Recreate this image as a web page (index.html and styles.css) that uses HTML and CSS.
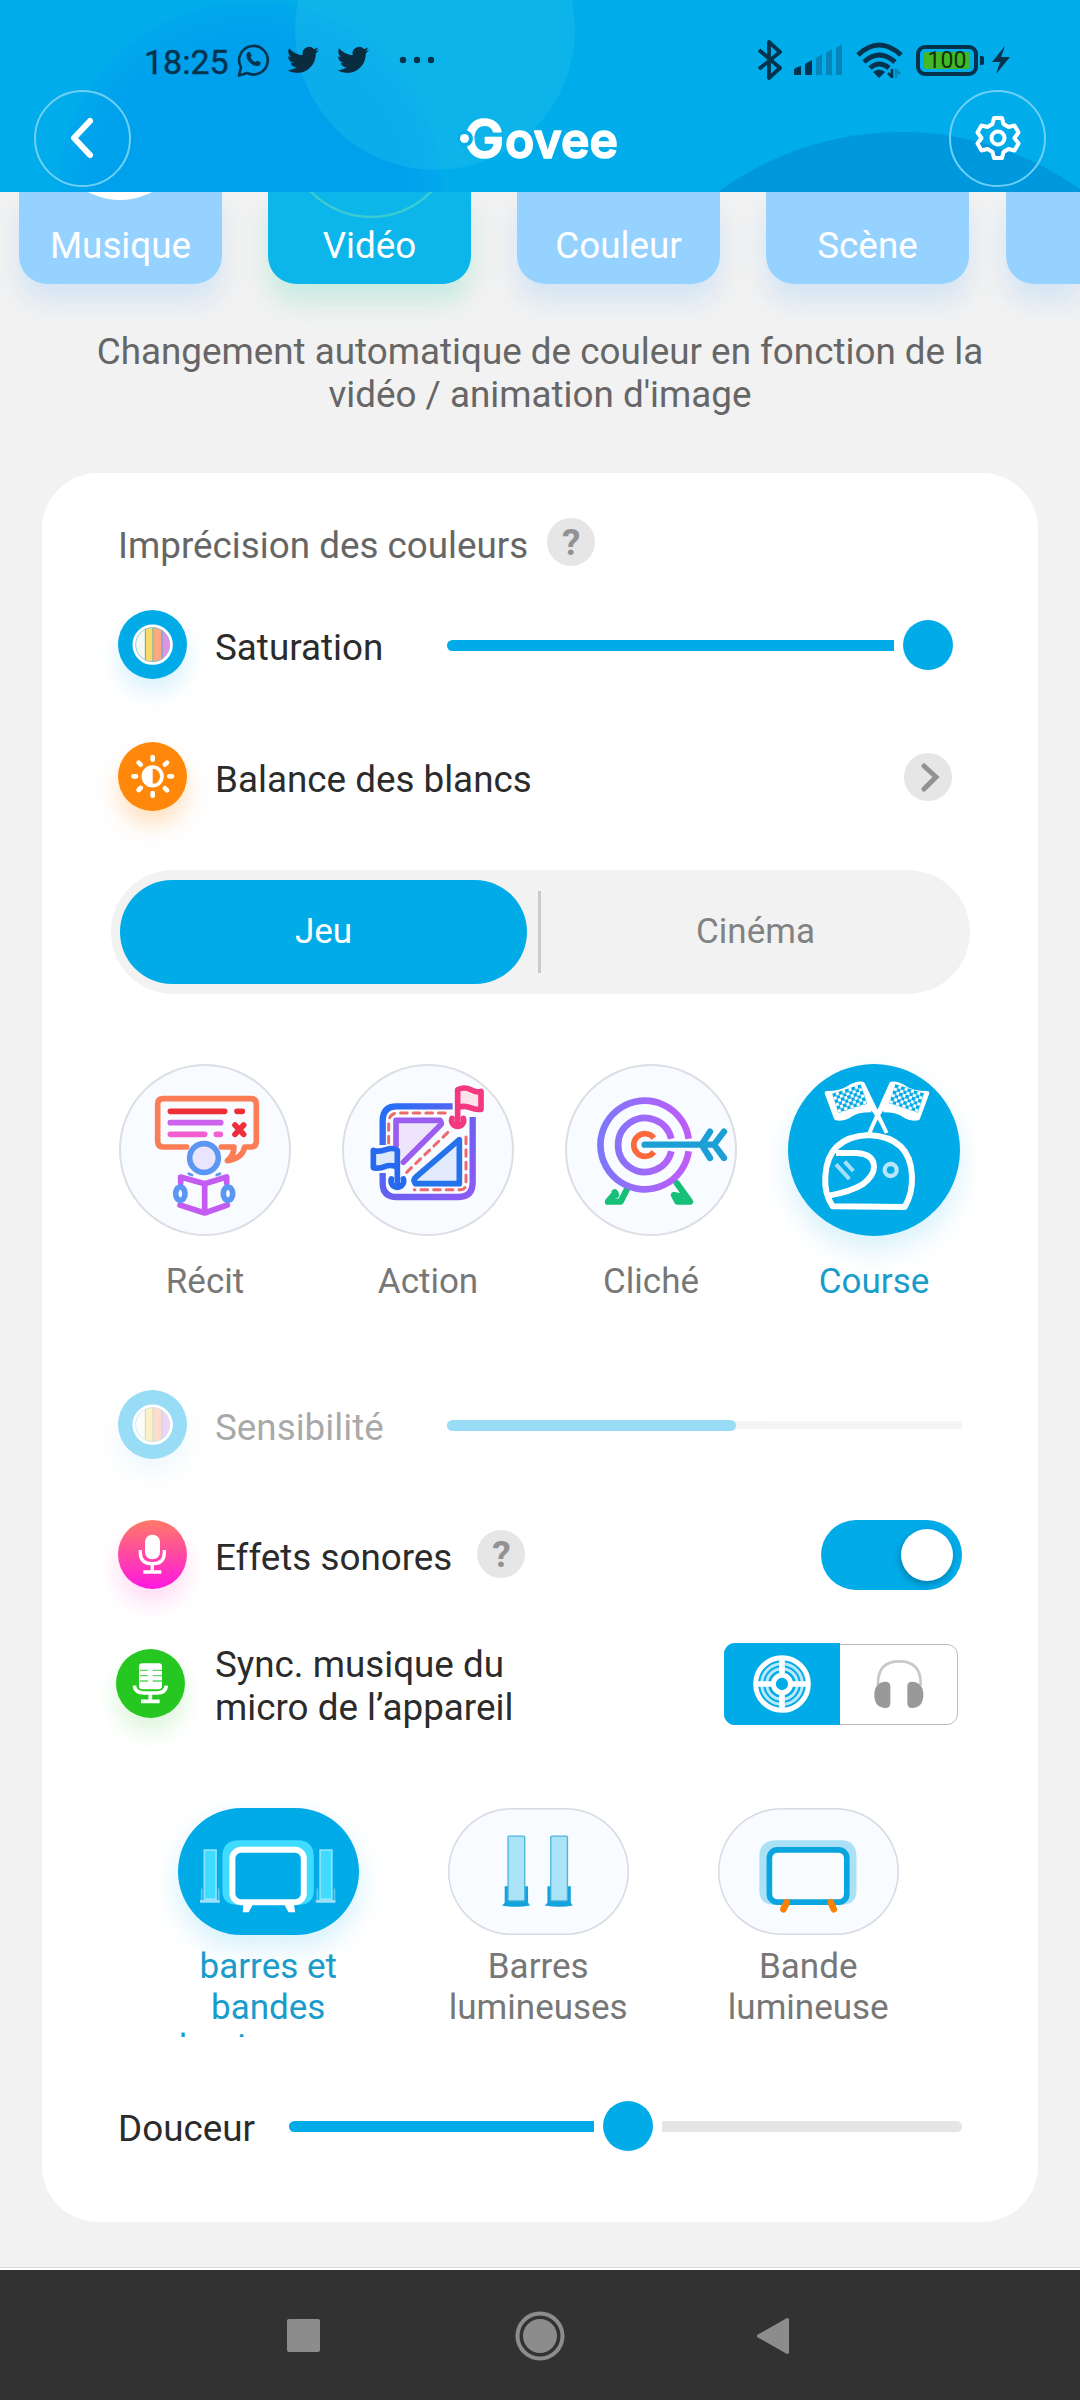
FILE: index.html
```html
<!DOCTYPE html>
<html lang="fr">
<head>
<meta charset="utf-8">
<title>Govee</title>
<link rel="stylesheet" href="styles.css">
</head>
<body>
<svg width="0" height="0" class="defs">
  <defs>
    <symbol id="bird" viewBox="0 0 24 24"><path d="M23.953 4.57a10 10 0 01-2.825.775 4.958 4.958 0 002.163-2.723c-.951.555-2.005.959-3.127 1.184a4.92 4.92 0 00-8.384 4.482C7.69 8.095 4.067 6.13 1.64 3.162a4.822 4.822 0 00-.666 2.475c0 1.71.87 3.213 2.188 4.096a4.904 4.904 0 01-2.228-.616v.06a4.923 4.923 0 003.946 4.827 4.996 4.996 0 01-2.212.085 4.936 4.936 0 004.604 3.417 9.867 9.867 0 01-6.102 2.105c-.39 0-.779-.023-1.17-.067a13.995 13.995 0 007.557 2.209c9.053 0 13.998-7.496 13.998-13.985 0-.21 0-.42-.015-.63A9.935 9.935 0 0024 4.59z"/></symbol>
    <symbol id="stripes" viewBox="0 0 207 207">
      <clipPath id="lens"><circle cx="104" cy="104" r="52"/></clipPath>
      <circle cx="104" cy="104" r="55" fill="#e9f7fd" stroke="#fff" stroke-width="11"/>
      <g clip-path="url(#lens)">
        <path d="M52 50h30v110H52z" fill="#f6f9f3"/><path d="M82 50h24v110H82z" fill="#fbdb67"/><path d="M106 50h26v110h-26z" fill="#ffa87f"/><path d="M132 50h30v110h-30z" fill="#e092de"/>
        <path d="M82 50v110M105 50v110M132 50v110" stroke="#4fa9cc" stroke-width="3" fill="none"/>
      </g>
      <circle cx="104" cy="104" r="51" fill="none" stroke="#7fc4de" stroke-width="2.500"/>
    </symbol>
    <pattern id="checks" width="20" height="20" patternUnits="userSpaceOnUse"><path d="M0 0h11v11H0zM10 10h11v11H10z" fill="#01a8e8"/></pattern>
    <linearGradient id="frame" x1="0" y1="0" x2="1" y2="1"><stop offset="0" stop-color="#1f70f5"/><stop offset=".55" stop-color="#6b60f0"/><stop offset="1" stop-color="#8d5bf6"/></linearGradient>
    <linearGradient id="rings" gradientUnits="userSpaceOnUse" x1="170" y1="0" x2="455" y2="0"><stop offset="0" stop-color="#7a78fb"/><stop offset="1" stop-color="#c25bf8"/></linearGradient>
  </defs>
</svg>

<header class="header">
  <svg class="header-bg" viewBox="0 0 1080 192">
    <defs><radialGradient id="soft"><stop offset=".8" stop-color="#00a1ec"/><stop offset="1" stop-color="#00a1ec" stop-opacity=".35"/></radialGradient></defs>
    <circle cx="250" cy="194" r="193" fill="url(#soft)"/>
    <circle cx="435" cy="30" r="140" fill="#25c1e9" fill-opacity=".36"/>
    <circle cx="901" cy="441" r="309" fill="#0098dd"/>
  </svg>
  <div class="status">
    <div class="status-left">
      <span class="clock">18:25</span>
      <svg class="wa" viewBox="0 0 34 36"><path d="M3 33.5l2-8.2A14.3 14.3 0 1 1 11 31z" fill="none" stroke="#05334d" stroke-width="2.6" stroke-linejoin="round"/><path d="M11.5 10.5c1-1.3 2.4-1 2.9.3l1 2.4c.4 1-.9 1.800-.9 2.300 1 2 2.700 3.600 4.800 4.500.7.2 1.400-1.600 2.300-1.200l2.600 1.300c.9.6.5 2.200-.4 3-2 1.600-4.500 1-6.800-.2-3-1.700-5.200-4.200-6.300-7.200-.6-2 0-4 .8-5.200z" fill="#05334d"/></svg>
      <svg class="tw" viewBox="0 0 24 24"><use href="#bird"/></svg>
      <svg class="tw" viewBox="0 0 24 24"><use href="#bird"/></svg>
      <svg class="dots" viewBox="0 0 36 8"><circle cx="4" cy="4" r="3.200"/><circle cx="18" cy="4" r="3.200"/><circle cx="32" cy="4" r="3.200"/></svg>
    </div>
    <div class="status-right">
      <svg width="26" height="40" viewBox="0 0 26 40" fill="none" stroke="#05334d" stroke-width="3.800" stroke-linejoin="round"><path d="M2 10l21 18-11 10V2l11 10L2 29"/></svg>
      <svg width="50" height="32" viewBox="0 0 50 32"><path d="M1 31v-5q0-2 7-4v9zM12 31V20l7-4v15z" fill="#05334d"/><path d="M23 31V14l6-4v21zM33 31V9l6-4v26zM43 31V4l6-4v31z" fill="#0784b9"/></svg>
      <svg width="48" height="36" viewBox="0 0 48 36" fill="none" stroke="#05334d" stroke-width="5"><path d="M2 13q21-20 43 0M8 20q15-14 31 0M14 26q9-8 19 0"/><path d="M17 30q6-5 12 0l-6 6z" fill="#05334d" stroke="none"/><path d="M36 27v8l-4-4" stroke-width="2.500"/><path d="M40 36v-8l4 4" stroke="#0784b9" stroke-width="2.500"/></svg>
      <span class="battery"><span class="level">100</span></span><span class="nub"></span>
      <svg width="20" height="28" viewBox="0 0 20 28"><path d="M14 0L1 16h8L5 28l14-17h-9z" fill="#05334d"/></svg>
    </div>
  </div>
  <div class="toolbar">
    <button class="round"><svg width="30" height="46" viewBox="0 0 30 46"><path d="M22 6L6 23l16 17" fill="none" stroke="#fff" stroke-width="6" stroke-linecap="round" stroke-linejoin="round"/></svg></button>
    <svg class="logo" viewBox="0 0 164 56">
      <text x="6" y="48" textLength="40" lengthAdjust="spacingAndGlyphs" class="logo-text logo-cap">G</text>
      <text x="47" y="48" textLength="113" lengthAdjust="spacingAndGlyphs" class="logo-text">ovee</text>
      <circle cx="7" cy="28.500" r="8" fill="#06afeb"/><circle cx="6.500" cy="28.500" r="4.500" fill="#fff"/>
    </svg>
    <button class="round"><svg width="46" height="46" viewBox="0 0 46 46" fill="none" stroke="#fff" stroke-width="4" stroke-linejoin="round"><path d="M19 3h8l1.500 6 5 3 6-1.500 4 7-4 5.500 4 5.500-4 7-6-1.500-5 3-1.500 6h-8l-1.500-6-5-3-6 1.500-4-7L6.500 23l-4-5.500 4-7 6 1.500 5-3z"/><circle cx="23" cy="23" r="6.500"/></svg></button>
  </div>
</header>

<nav class="tabs">
  <div class="tab"><svg class="tab-art" viewBox="0 0 203 92"><circle cx="101" cy="-60" r="68" fill="#fff"/></svg><span>Musique</span></div>
  <div class="tab active"><svg class="tab-art" viewBox="0 0 203 92"><circle cx="103" cy="-59" r="84" fill="none" stroke="#3bcbd3" stroke-width="2.500"/></svg><span>Vidéo</span></div>
  <div class="tab"><span>Couleur</span></div>
  <div class="tab"><span>Scène</span></div>
  <div class="tab last"></div>
</nav>

<p class="intro">Changement automatique de couleur en fonction de la<br>vidéo / animation d'image</p>

<main class="card">
  <div class="row title"><span>Imprécision des couleurs</span><span class="help">?</span></div>

  <div class="row saturation">
    <span class="badge blue"><svg viewBox="0 0 207 207"><use href="#stripes"/></svg></span>
    <span class="label">Saturation</span>
    <div class="slider"><i class="fill" style="width:447px"></i><i class="thumb"></i></div>
  </div>

  <div class="row balance">
    <span class="badge orange"><svg viewBox="113 787 207 207"><g fill="none" stroke="#fff" stroke-linecap="round" stroke-width="14"><circle cx="217" cy="890" r="28" stroke-width="11"/><path d="M217 832v8M217 940v8M159 890h8M267 890h8M175 849l6 6M254 926l6 6M175 931l6-6M254 855l6-6"/></g><path d="M217 860a30 30 0 0 0 0 60z" fill="#fff"/></svg></span>
    <span class="label">Balance des blancs</span>
    <span class="go"><svg width="48" height="48" viewBox="0 0 48 48"><path d="M20 13l12 11-12 12" fill="none" stroke="#919191" stroke-width="5" stroke-linecap="round"/></svg></span>
  </div>

  <div class="segment"><span class="seg on">Jeu</span><i class="divider"></i><span class="seg">Cinéma</span></div>

  <div class="modes">
    <div class="mode">
      <svg class="disc" viewBox="89 73 516 516" fill="none" stroke-width="17" stroke-linecap="round" stroke-linejoin="round">
        <path d="M292 322h-70q-17 0-17-17V193q0-16 17-16h262q17 0 17 16v112q0 17-17 17h-18q-6 34-52 41 20-16 20-41h-38" stroke="#fb7d56"/>
        <path d="M243 215h163M443 215h16" stroke="#ed3038"/><path d="M243 249h151" stroke="#cd62ed"/><path d="M243 284h103M381 284h12" stroke="#f35fd0"/>
        <path d="M437 256l26 28M463 256l-26 28" stroke="#ef2f3c"/>
        <circle cx="344" cy="355" r="43" stroke="#5a96f2" fill="#e9e5fd"/><path d="M298 402l10 4M392 402l-10 4" stroke="#5a96f2" stroke-width="8"/>
        <path d="M274 430v-18l72 20 66-20v18M346 434v86M272 496l74 24 68-24" stroke="#c35cf0"/>
        <ellipse cx="273" cy="462" rx="14" ry="20" stroke="#5a96f2"/><ellipse cx="416" cy="462" rx="14" ry="20" stroke="#5a96f2"/>
      </svg><span>Récit</span>
    </div>
    <div class="mode">
      <svg class="disc" viewBox="758 73 516 516" fill="none" stroke-width="17" stroke-linecap="round" stroke-linejoin="round">
        <path d="M880 316v-72q0-44 42-44h168M1150 232v196q0 44-42 44H922q-42 0-42-42v-30" stroke="url(#frame)" stroke-linecap="butt" stroke-width="19"/>
        <path d="M920 318v-76h132q8 10-2 18L942 368" fill="#eee5fc" stroke="#9b5cf0"/>
        <path d="M1110 300v132H978q-8-12 2-20z" fill="#e1eafc" stroke="#2573ea"/>
        <path d="M898 310v-62q2-28 28-28h150M1130 292v140q0 18-16 18H975M952 398l130-126" stroke="#ee6a6c" stroke-width="9" stroke-dasharray="20 18"/>
        <path d="M1088 236a18 18 0 1 0 34 0" stroke="#f4387f"/><path d="M1105 248v-98q20-10 40 0t30 5v54q-16 2-32-5t-34-2" stroke="#f4387f" fill="#fce3ea"/>
        <path d="M906 418a19 19 0 1 0 36 0" stroke="#2769ee"/><path d="M924 430v-98q-12-10-34-2t-38 2v52q18 4 34-3t34 0" stroke="#2769ee" fill="#dce9fc"/>
      </svg><span>Action</span>
    </div>
    <div class="mode">
      <svg class="disc" viewBox="73 73 516 516" fill="none" stroke-width="19" stroke-linecap="round" stroke-linejoin="round">
        <path d="M260 446l-20 40h-38l22-26M222 458l4 8M408 430l40 56h-38l-10-20 20 4" stroke="#17c077"/>
        <path d="M444 297a133 133 0 1 0 0 38M392 297a81 81 0 1 0 0 38" stroke="url(#rings)" stroke-linecap="butt" stroke-width="20"/>
        <path d="M340 295a34 34 0 1 0 0 42" stroke="#fb693c" stroke-linecap="butt" stroke-width="17"/>
        <path d="M312 315h206M508 276l-25 39 25 40M550 276l-30 39 30 40" stroke="#1c9fd4"/>
      </svg><span>Cliché</span>
    </div>
    <div class="mode on">
      <svg class="disc" viewBox="744 73 516 516" fill="none" stroke="#fff" stroke-width="18" stroke-linejoin="round">
        <path d="M1040 280L968 132q-18-4-42 12t-66 16l28 76q26 4 44-10t62-14M988 280l66-148q18-4 40 12t68 16l-28 76q-26 4-44-10t-60-14" fill="#fff" stroke-width="12"/>
        <path d="M1003 276l10-20 12 20z" fill="#01abe8" stroke="none"/>
        <g stroke="none" fill="url(#checks)"><path transform="translate(876 162) rotate(-18)" d="M0 0h91v61H0z"/><path transform="translate(1066 133) rotate(18)" d="M0 0h91v61H0z"/></g>
        <path d="M878 500q-26-38-22-90 6-118 130-124 126 6 130 124 2 52-22 92z"/>
        <path d="M888 340h62q52 4 52 42 0 26-34 52-34 22-102 34" stroke-linejoin="miter"/>
        <path d="M888 374l40 44M914 366l26 28" stroke="#a6e0f8" stroke-width="12"/><circle cx="1052" cy="391" r="18" stroke="#b5e6fa" stroke-width="13"/>
      </svg><span>Course</span>
    </div>
  </div>

  <div class="row sensitivity">
    <span class="badge blue"><svg viewBox="0 0 207 207"><use href="#stripes"/></svg></span>
    <span class="label">Sensibilité</span>
    <div class="slider track"><i class="fill" style="width:289px"></i></div>
  </div>

  <div class="row sound">
    <span class="badge pink"><svg viewBox="84 482 207 207"><rect x="165" y="526" width="45" height="74" rx="22" fill="#fff"/><path d="M151 572v8q0 33 36 33t36-33v-8M187 613v24M160 638h54" fill="none" stroke="#fff" stroke-width="10"/></svg></span>
    <span class="label">Effets sonores</span><span class="help">?</span>
    <span class="switch"><i></i></span>
  </div>

  <div class="row sync">
    <span class="badge green"><svg viewBox="78 868 207 207"><rect x="147" y="911" width="69" height="78" rx="10" fill="#fff"/><path d="M150 932h24M188 932h28M150 948h24M188 948h28M150 964h24M188 964h28" stroke="#5fd55c" stroke-width="4"/><path d="M133 978q2 22 30 22h38q26 0 28-22M181 1000v22M153 1025h56" fill="none" stroke="#fff" stroke-width="11"/></svg></span>
    <span class="label">Sync. musique du<br>micro de l’appareil</span>
    <div class="source">
      <span class="src on"><svg width="58" height="58" viewBox="0 0 174 174" fill="none"><g stroke="#b9e7fa" stroke-width="9"><circle cx="87" cy="87" r="46"/><circle cx="87" cy="87" r="61"/></g><path d="M87 10v154M10 87h154" stroke="#fff" stroke-width="17"/><circle cx="87" cy="87" r="79" stroke="#fff" stroke-width="15"/><circle cx="87" cy="87" r="26" fill="#01abe8" stroke="#fff" stroke-width="15"/></svg></span>
      <span class="src"><svg width="50" height="50" viewBox="584 536 150 150"><path d="M596 615v-6q0-66 64-66t64 66v6" fill="none" stroke="#c9c9c9" stroke-width="8"/><path d="M633 618q0-14-14-14-34 2-34 39 0 38 34 40 14 0 14-14zM684 618q0-14 14-14 34 2 34 39 0 38-34 40-14 0-14-14z" fill="#999"/></svg></span>
    </div>
  </div>

  <div class="devices">
    <div class="device on">
      <svg class="pill" viewBox="85 84 541 380">
        <path d="M218 230q0-50 50-50h174q50 0 50 50v102q0 38-40 42H258q-40-4-40-42z" fill="#3fdcff"/>
        <path d="M281 370h30l-14 26h-18zM402 370h30l4 26h-20z" fill="#fff"/>
        <rect x="248" y="209" width="214" height="157" rx="26" fill="#01abe8" stroke="#fff" stroke-width="18"/>
        <g fill="#3fdcff" stroke="#8be6fd" stroke-width="5"><path d="M164 210h35v147h-35zM511 210h35v147h-35z"/></g>
        <path d="M156 325v32M207 325v32M503 325v32M554 325v32" stroke="#5cc8f2" stroke-width="5"/><path d="M151 363h59M498 363h59" stroke="#a0dff8" stroke-width="9"/>
      </svg><span>barres et<br>bandes<br>lumineuses</span>
    </div>
    <div class="device">
      <svg class="pill" viewBox="896 84 541 380">
        <g id="bar"><path d="M1066 318h70v50l6 8q-40 8-84 0l8-8z" fill="#12a2dc"/><rect x="1076" y="168" width="50" height="194" rx="3" fill="#abe3f8" stroke="#4bb5dc" stroke-width="4"/></g><use href="#bar" x="128"/>
      </svg><span>Barres<br>lumineuses</span>
    </div>
    <div class="device">
      <svg class="pill" viewBox="535 84 541 380">
        <path d="M659 230q0-50 50-50h194q47 0 47 50v102q0 38-40 42H699q-40-4-40-42z" fill="#abe1f7"/>
        <rect x="689" y="209" width="232" height="157" rx="24" fill="#f8fbff" stroke="#0aa5df" stroke-width="17"/>
        <path d="M741 366l-10 21M873 366l9 21" stroke="#fb8109" stroke-width="20" stroke-linecap="round"/>
      </svg><span>Bande<br>lumineuse</span>
    </div>
  </div>

  <div class="row softness">
    <span>Douceur</span>
    <div class="slider"><i class="fill" style="width:305px"></i><i class="thumb"></i><i class="rest"></i></div>
  </div>
</main>

<footer class="navbar">
  <svg width="33" height="33" viewBox="0 0 33 33"><rect width="33" height="33" rx="2"/></svg>
  <svg class="home" width="50" height="50" viewBox="0 0 50 50"><circle cx="25" cy="25" r="22.500" fill="none" stroke="#8c8c8c" stroke-width="4"/><circle cx="25" cy="25" r="17"/></svg>
  <svg width="34" height="38" viewBox="0 0 34 38"><path d="M31 1q2 0 2 2v32q0 2-2 2L1 20v-2z"/></svg>
</footer>
</body>
</html>
```
FILE: styles.css
```css
* { box-sizing: border-box; }
body {
  margin: 0; width: 1080px; height: 2400px; overflow: hidden;
  display: flex; flex-direction: column;
  background: #f2f2f2; color: #2b2b2b;
  font: 36.8px/43px Roboto, "Liberation Sans", sans-serif;
}
svg { display: block; flex: none; }
.defs { position: absolute; }
i { display: block; flex: none; }
button { padding: 0; background: none; font: inherit; }

.header { position: relative; z-index: 1; height: 192px; flex: none; padding-top: 38px; background: #01aceb; }
.header-bg { position: absolute; left: 0; top: 0; width: 1080px; height: 192px; }
.status { position: relative; height: 44px; display: flex; justify-content: space-between; padding: 0 69px 0 144px; }
.status-left, .status-right { display: flex; align-items: center; }
.clock { width: 84px; font-size: 34px; line-height: 44px; color: #05334d; margin-top: 3px; -webkit-text-stroke: .4px #05334d; }
.wa { width: 34px; height: 36px; margin-left: 8px; }
.tw { width: 32px; height: 32px; margin-left: 17px; fill: #0a2c40; }
.tw + .tw { margin-left: 18px; }
.dots { width: 36px; height: 8px; margin-left: 30px; fill: #05334d; }
.status-right { gap: 12.5px; }
.status-right svg:first-child { margin-right: -2px; }
.battery { width: 62px; height: 31px; border: 4px solid #04324b; border-radius: 9px; padding: 3px 4px; display: flex; }
.level { flex: 1; background: #41b825; border-radius: 2px; color: #12310f; font-size: 23px; line-height: 18px; text-align: center; }
.nub { width: 4px; height: 9px; margin-left: -11px; margin-right: -5px; background: #04324b; border-radius: 0 2px 2px 0; }
.toolbar { position: relative; height: 98px; margin-top: 7px; display: flex; align-items: center; justify-content: space-between; padding: 0 34px; }
.round { width: 97px; height: 97px; border: 2px solid #6fd0f6; border-radius: 50%; display: flex; align-items: center; justify-content: center; }
.logo { width: 164px; height: 56px; overflow: visible; }
.logo-text { font: 600 50px Inter, Lato, sans-serif; fill: #fff; stroke: #fff; stroke-width: 1.500px; stroke-linejoin: round; }
.logo-cap { font-size: 54px; }

.tabs { height: 92px; flex: none; display: flex; gap: 46px; padding-left: 19px; }
.tab { position: relative; width: 203px; flex: none; border-radius: 0 0 28px 28px; background: #96d2ff; color: #fff; text-align: center; padding-top: 32px; box-shadow: 0 18px 26px rgba(120, 190, 250, .24); }
.tab.active { background: #0cb6ea; box-shadow: 0 18px 26px rgba(90, 215, 180, .28); }
.tab.last { width: auto; flex: 1; margin-left: -9px; border-radius: 0 0 0 28px; }
.tab-art { position: absolute; left: 0; top: 0; width: 203px; height: 92px; }
.intro { margin: 46px 0 0; height: 143px; flex: none; text-align: center; color: #666; }

.card { flex: none; margin: 0 42px; height: 1749px; padding: 39px 76px 0; background: #fff; border-radius: 56px; }
.row { display: flex; align-items: center; height: 70px; }
.title { height: 60px; color: #666; }
.title > span:first-child { margin-top: 6px; }
.help { width: 48px; height: 48px; margin-left: 19px; border-radius: 50%; background: #e6e6e6; color: #929292; font-weight: 700; font-size: 37px; line-height: 49px; text-align: center; }
.saturation { margin-top: 38px; }
.badge { width: 69px; height: 69px; margin-right: 27px; margin-top: -2px; border-radius: 50%; flex: none; }
.badge svg { width: 69px; height: 69px; }
.blue { background: #01abe8; box-shadow: 0 14px 22px rgba(1, 171, 232, .15); }
.orange { background: #ff8709; box-shadow: 0 14px 22px rgba(255, 135, 9, .25); }
.pink { background: linear-gradient(#ff7a66, #ff17e0); box-shadow: 0 14px 22px rgba(255, 40, 190, .16); }
.green { background: #27c722; box-shadow: 0 14px 22px rgba(39, 199, 34, .16); margin-left: -2px; margin-right: 29px; }
.label { margin-top: 4px; margin-left: 1px; }
.slider { width: 515px; margin-left: auto; display: flex; align-items: center; gap: 9px; }
.fill { height: 11px; background: #01abe8; border-radius: 6px 0 0 6px; }
.thumb { width: 50px; height: 50px; border-radius: 50%; background: #01abe8; }
.rest { flex: 1; height: 11px; background: #e5e5e5; border-radius: 0 6px 6px 0; }
.balance { margin-top: 62px; }
.go { margin: 0 10px 0 auto; width: 48px; height: 48px; border-radius: 50%; background: #e6e6e6; }

.segment { height: 124px; margin: 58px -8px 0 -7px; padding: 10px 0 10px 9px; border-radius: 63px; background: #f2f2f2; display: flex; align-items: center; font-size: 35px; color: #828282; }
.seg { flex: 1; line-height: 104px; text-align: center; }
.seg.on { flex: 0 0 407px; border-radius: 52px; background: #01abe8; color: #fff; }
.divider { width: 3px; height: 82px; margin-left: 11px; background: #cbcbcb; }

.modes { margin-top: 70px; padding: 0 2px 0 1px; display: flex; justify-content: space-between; font-size: 35px; color: #777; }
.mode { width: 172px; text-align: center; line-height: 42px; }
.disc { width: 172px; height: 172px; border-radius: 50%; margin-bottom: 25px; background: #f8fbff; box-shadow: inset 0 0 0 2px #dcdee4; }
.on .disc { background: #01abe8; box-shadow: 0 14px 28px rgba(1, 171, 232, .16); }
.mode.on, .device.on { color: #1a9ccb; }

.sensitivity { margin-top: 87px; opacity: .4; }
.track { background: linear-gradient(#e5e5e5, #e5e5e5) center / 100% 8px no-repeat; }
.track .fill { border-radius: 6px; }
.sound { margin-top: 60px; }
.switch { width: 141px; height: 70px; margin-left: auto; border-radius: 35px; background: #01abe8; padding: 9px; display: flex; justify-content: flex-end; }
.switch i { width: 52px; height: 52px; border-radius: 50%; background: #fff; box-shadow: -1px 3px 6px rgba(0, 60, 100, .4); }
.sound .help { margin-left: 25px; margin-top: -2px; }
.sync { margin-top: 50px; height: 88px; }
.source { margin: 0 4px 0 auto; width: 234px; height: 81px; display: flex; border: 1.500px solid #bdbdbd; border-radius: 11px; }
.src { flex: 1; display: flex; align-items: center; justify-content: center; }
.src.on { background: #01abe8; border-radius: 11px 0 0 11px; margin: -1.500px 0 -1.500px -1.500px; }

.devices { margin: 80px 0 0 60px; display: flex; gap: 89.500px; font-size: 35px; color: #777; }
.device { width: 180.500px; text-align: center; line-height: 40.500px; }
.pill { width: 180.500px; height: 127px; border-radius: 64px; margin-bottom: 12px; background: #f8fbff; box-shadow: inset 0 0 0 1.500px #d8dae1; }
.device.on .pill { background: #01abe8; box-shadow: 0 12px 28px rgba(1, 171, 232, .18); }
.device span { display: block; height: 90px; overflow: hidden; white-space: nowrap; }
.softness { margin-top: 54px; }
.softness > span { margin-top: 4px; }
.softness .slider { width: 673px; }

.navbar { height: 130px; margin-top: auto; flex: none; box-shadow: 0 -2px #fff, 0 -3px #dadada; background: #323232; fill: #8c8c8c; display: flex; align-items: center; justify-content: space-between; padding: 1px 290px 0 287px; }
.home { position: relative; left: 2px; }
```
